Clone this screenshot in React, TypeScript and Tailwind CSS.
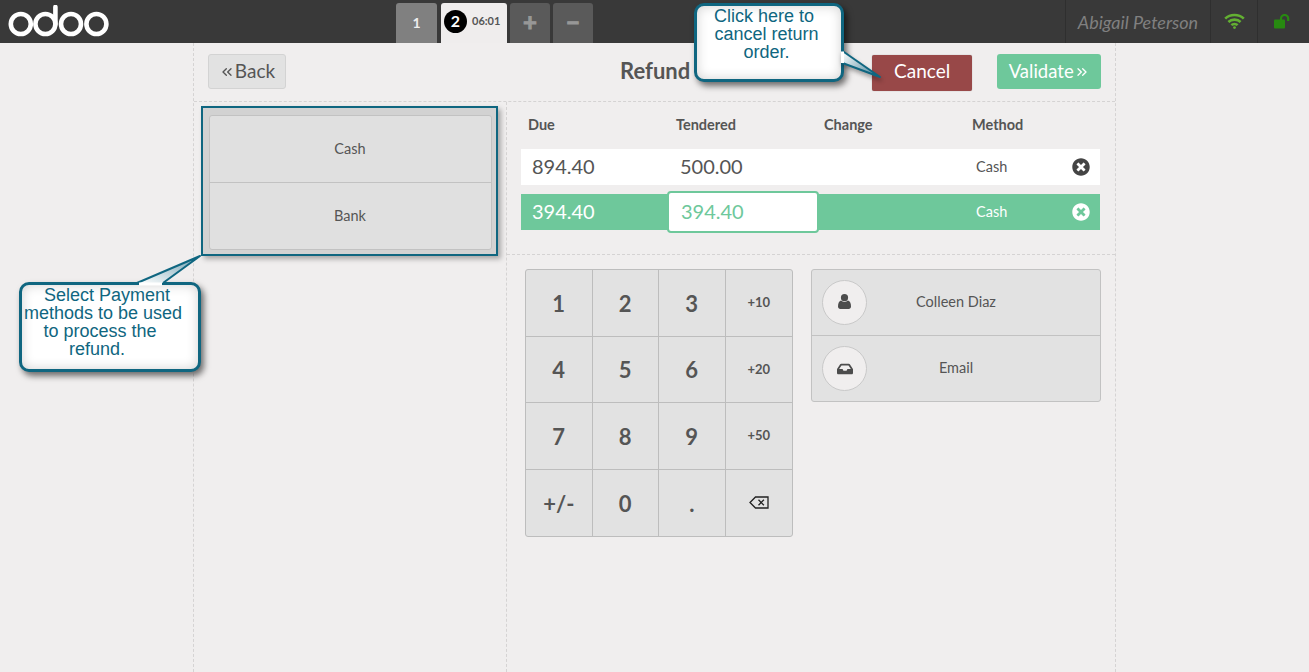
import React from "react";
import { FaInbox, FaTimesCircle } from "react-icons/fa";
import { ChevronsLeft, ChevronsRight } from "lucide-react";

function Logo() {
  return (
    <svg width="102" height="34" viewBox="0 0 102 34" className="ml-[8px] mt-[5px] block" fill="none" stroke="#fff" strokeWidth="4.6">
      <circle cx="12.8" cy="19" r="10" />
      <circle cx="37.4" cy="19" r="10" />
      <path d="M47.4 19V2" strokeLinecap="round" />
      <circle cx="63" cy="19" r="10" />
      <circle cx="88.4" cy="19" r="10" />
    </svg>
  );
}

function UserIcon() {
  return (
    <svg width="13" height="15" viewBox="0 0 13 15" fill="#4c4c4c">
      <circle cx="6.5" cy="3.7" r="3.6" />
      <path d="M0 12.6C0 9.4 1 7 3 6.6c1 .9 2.2 1.3 3.5 1.3S9 7.5 10 6.6c2 .4 3 2.8 3 6 0 1.4-1 2.4-2.3 2.4H2.3C1 15 0 14 0 12.6z" />
    </svg>
  );
}

function BackspaceIcon() {
  return (
    <svg width="20" height="13" viewBox="0 0 20 13" fill="none" stroke="#222" strokeWidth="1.3">
      <path d="M19 1H6.5L1 6.5 6.5 12H19z" />
      <path d="M9.5 3.8l5.4 5.4M14.9 3.8l-5.4 5.4" />
    </svg>
  );
}

function WifiIcon() {
  return (
    <svg width="21" height="16" viewBox="0 0 21 16" fill="none" stroke="#63b032" strokeWidth="2.6">
      <path d="M1.2 5.6C6.2 .7 14.8 .7 19.8 5.6" />
      <path d="M4.4 9C7.6 5.8 13.4 5.8 16.6 9" />
      <path d="M7.4 12.2c1.6-1.6 4.6-1.6 6.2 0" />
      <circle cx="10.5" cy="14.6" r="1.4" fill="#63b032" stroke="none" />
    </svg>
  );
}

function UnlockIcon() {
  return (
    <svg width="19" height="15" viewBox="0 0 19 15">
      <rect x="0" y="5.5" width="11" height="9" rx="1" fill="#278a10" />
      <path d="M7 6V4.6a3.6 3.6 0 0 1 7.2 0V7" fill="none" stroke="#278a10" strokeWidth="2.2" />
    </svg>
  );
}

const callout =
  "absolute z-20 rounded-[10px] border-[3px] border-[#0f6680] bg-white font-['Liberation_Sans',sans-serif] text-[18px] leading-[18px] text-[#0f6680] shadow-[inset_0_0_12px_rgba(0,0,0,0.18),3px_4px_6px_rgba(0,0,0,0.55)]";

export default function App() {
  const keys = ["1", "2", "3", "+10", "4", "5", "6", "+20", "7", "8", "9", "+50", "+/-", "0", ".", "bs"];
  return (
    <div className="relative flex h-[672px] w-[1309px] flex-col overflow-hidden bg-[#f0eeee] font-['Lato',sans-serif] text-[#555]">
      {/* Top bar */}
      <header className="flex h-[43px] shrink-0 items-start bg-[#393939]">
        <div className="w-[396px]"><Logo /></div>
        <div className="mt-[3px] flex h-[40px] text-[14px] font-bold">
          <div className="flex w-[41px] items-center justify-center rounded-t-[3px] bg-[#808080] pb-[2px] text-[#eee]">1</div>
          <div className="ml-[4px] flex w-[66px] items-center rounded-t-[3px] bg-[#efeded] pb-[4px] pl-[3px] text-[#555]">
            <span className="flex h-[23px] w-[23px] items-center justify-center rounded-full bg-black text-[16px] text-white">2</span>
            <span className="ml-[5px] text-[11px]">06:01</span>
          </div>
          <div className="ml-[3px] flex w-[40px] items-center justify-center rounded-t-[3px] bg-[#5a5a5a] pb-[3px] text-[24px] text-[#979797] [-webkit-text-stroke:1px_#979797]">+</div>
          <div className="ml-[3px] flex w-[40px] items-center justify-center rounded-t-[3px] bg-[#5a5a5a] pb-[3px] text-[24px] text-[#979797] [-webkit-text-stroke:1px_#979797]">−</div>
        </div>
        <div className="ml-auto flex h-[43px]">
          <div className="flex w-[145px] items-center justify-center border-l border-[#2f2f2f] pt-[1px] text-[18px] italic text-[#808080]">Abigail Peterson</div>
          <div className="flex w-[47px] items-center justify-center border-l border-[#2f2f2f] pb-[1px]"><WifiIcon /></div>
          <div className="flex w-[52px] items-center justify-center border-l border-[#2f2f2f] pb-[1px]"><UnlockIcon /></div>
        </div>
      </header>

      {/* Screen */}
      <main className="ml-[193px] flex w-[923px] grow flex-col border-x border-dashed border-[#d5d3d3]">
        <div className="relative flex h-[59px] shrink-0 items-start border-b border-dashed border-[#d5d3d3]">
          <button className="ml-[14px] mt-[11px] flex h-[35px] w-[78px] items-center justify-center rounded-[3px] border border-[#d3d3d3] bg-[#e2e2e2] text-[19px] text-[#555]">
            <ChevronsLeft size={16} strokeWidth={2} />Back
          </button>
          <h1 className="ml-[334px] mt-[13px] text-[22px] font-bold leading-[30px] text-[#555]">Refund</h1>
          <button className="ml-[182px] mt-[12px] h-[36px] w-[100px] rounded-[2px] border-0 bg-[#984848] pb-[3px] text-[19px] text-white shadow-[0_0_1px_rgba(0,0,0,0.4)]">Cancel</button>
          <button className="ml-[25px] mt-[11px] flex h-[35px] w-[104px] items-center justify-center rounded-[3px] bg-[#6ec89b] text-[18.5px] text-white">
            Validate<ChevronsRight size={16} strokeWidth={2} />
          </button>
        </div>

        <div className="flex grow">
          {/* Left column */}
          <div className="w-[313px] shrink-0 border-r border-dashed border-[#d5d3d3] pl-[7px] pt-[4px]">
            <div className="h-[150px] w-[297px] border-2 border-[#0f6680] bg-[#d2d2d2] p-[7px] pl-[6px] shadow-[3px_3px_5px_rgba(0,0,0,0.3)]">
              <div className="w-[283px] rounded-[3px] border border-[#c2c2c2] bg-[#e0e0e0] text-[14.5px]">
                <div className="flex h-[67px] items-center justify-center border-b border-[#c2c2c2] pr-[1px]">Cash</div>
                <div className="flex h-[66px] items-center justify-center pr-[1px]">Bank</div>
              </div>
            </div>
          </div>

          {/* Right column */}
          <div className="flex grow flex-col">
            <div className="h-[153px] shrink-0 border-b border-dashed border-[#d5d3d3] pl-[14px] pt-[12px]">
              <div className="flex h-[22px] items-center pl-[7px] text-[14.5px] font-bold">
                <span className="w-[148px]">Due</span>
                <span className="w-[148px]">Tendered</span>
                <span className="w-[148px]">Change</span>
                <span>Method</span>
              </div>
              <div className="mt-[13px] flex h-[36px] w-[579px] items-center bg-white pl-[11px] text-[20px]">
                <span className="w-[148px] pb-[2px]">894.40</span>
                <span className="w-[296px] pb-[2px]">500.00</span>
                <span className="w-[96px] pb-[1px] text-[14.5px]">Cash</span>
                <FaTimesCircle size={18} className="text-[#444]" />
              </div>
              <div className="mt-[9px] flex h-[36px] w-[579px] items-center bg-[#6ec89b] pl-[11px] text-[20px] text-white">
                <span className="w-[135px] pb-[2px]">394.40</span>
                <span className="relative z-10 my-[-3px] flex h-[42px] w-[152px] items-center rounded-[4px] border-2 border-[#6ec89b] bg-white pb-[2px] pl-[12px] text-[#6ec89b]">394.40</span>
                <span className="ml-[157px] w-[96px] pb-[1px] text-[14.5px]">Cash</span>
                <FaTimesCircle size={18} />
              </div>
            </div>

            <div className="flex items-start pl-[18px] pt-[14px]">
              <div className="grid h-[268px] w-[268px] grid-cols-4 grid-rows-4 overflow-hidden rounded-[3px] border border-[#bdbdbd] bg-[#e2e2e2]">
                {keys.map((k, i) => (
                  <div
                    key={k}
                    className={`flex items-center justify-center border-[#bdbdbd] ${i % 4 !== 3 ? "border-r" : ""} ${i < 12 ? "border-b" : ""} ${i % 4 === 3 ? "text-[13px] font-bold" : "pt-[1px] text-[22px] font-bold"}`}
                  >
                    {k === "bs" ? <BackspaceIcon /> : k}
                  </div>
                ))}
              </div>
              <div className="ml-[18px] w-[290px] rounded-[3px] border border-[#c2c2c2] bg-[#e2e2e2] text-[14.5px]">
                <div className="relative flex h-[66px] items-center justify-center border-b border-[#c2c2c2] pb-[2px]">
                  <span className="absolute left-[10px] top-[10px] flex h-[45px] w-[45px] items-center justify-center rounded-full border border-[#c9c9c9] bg-[#f0eeee] pb-[2px]"><UserIcon /></span>
                  Colleen Diaz
                </div>
                <div className="relative flex h-[65px] items-center justify-center pb-[2px]">
                  <span className="absolute left-[10px] top-[10px] flex h-[45px] w-[45px] items-center justify-center rounded-full border border-[#c9c9c9] bg-[#f0eeee] text-[#4c4c4c]"><FaInbox size={16} /></span>
                  Email
                </div>
              </div>
            </div>
          </div>
        </div>
      </main>

      {/* Callouts */}
      <svg className="absolute left-[838px] top-[46px] z-30 drop-shadow-[1px_3px_2px_rgba(0,0,0,0.35)]" width="46" height="36" viewBox="0 0 46 36">
        <defs>
          <linearGradient id="tailA" x1="0" y1="0" x2="1" y2="0.6">
            <stop offset="0" stopColor="#ffffff" />
            <stop offset="1" stopColor="#5d93a6" />
          </linearGradient>
        </defs>
        <path d="M4.5 5L42 31 4.5 17" fill="url(#tailA)" stroke="#0f6680" strokeWidth="2" strokeLinejoin="round" />
        <path d="M4.5 5.5V17" stroke="#fff" strokeWidth="3" />
      </svg>
      <div className={`${callout} left-[694px] top-[3px] h-[79px] w-[150px] pt-[1px] text-center`}>
        <div className="pr-[10px]">Click here to</div>
        <div className="pr-[5px]">cancel return</div>
        <div className="pr-[5px]">order.</div>
      </div>

      <svg className="absolute left-[130px] top-[252px] z-30" width="74" height="36" viewBox="0 0 74 36">
        <defs>
          <linearGradient id="tailB" x1="0" y1="1" x2="1" y2="0">
            <stop offset="0" stopColor="#ffffff" />
            <stop offset="1" stopColor="#6f9fb0" />
          </linearGradient>
        </defs>
        <path d="M7 31L70 4 33 31" fill="url(#tailB)" stroke="#0f6680" strokeWidth="2" strokeLinejoin="round" />
        <path d="M9 32H32" stroke="#fff" strokeWidth="3" />
      </svg>
      <div className={`${callout} left-[19px] top-[282px] h-[90px] w-[182px] pt-[1px] text-center`}>
        <div className="pr-[6px]">Select Payment</div>
        <div className="pr-[14px]">methods to be used</div>
        <div className="pr-[20px]">to process the</div>
        <div className="pr-[26px]">refund.</div>
      </div>
    </div>
  );
}
